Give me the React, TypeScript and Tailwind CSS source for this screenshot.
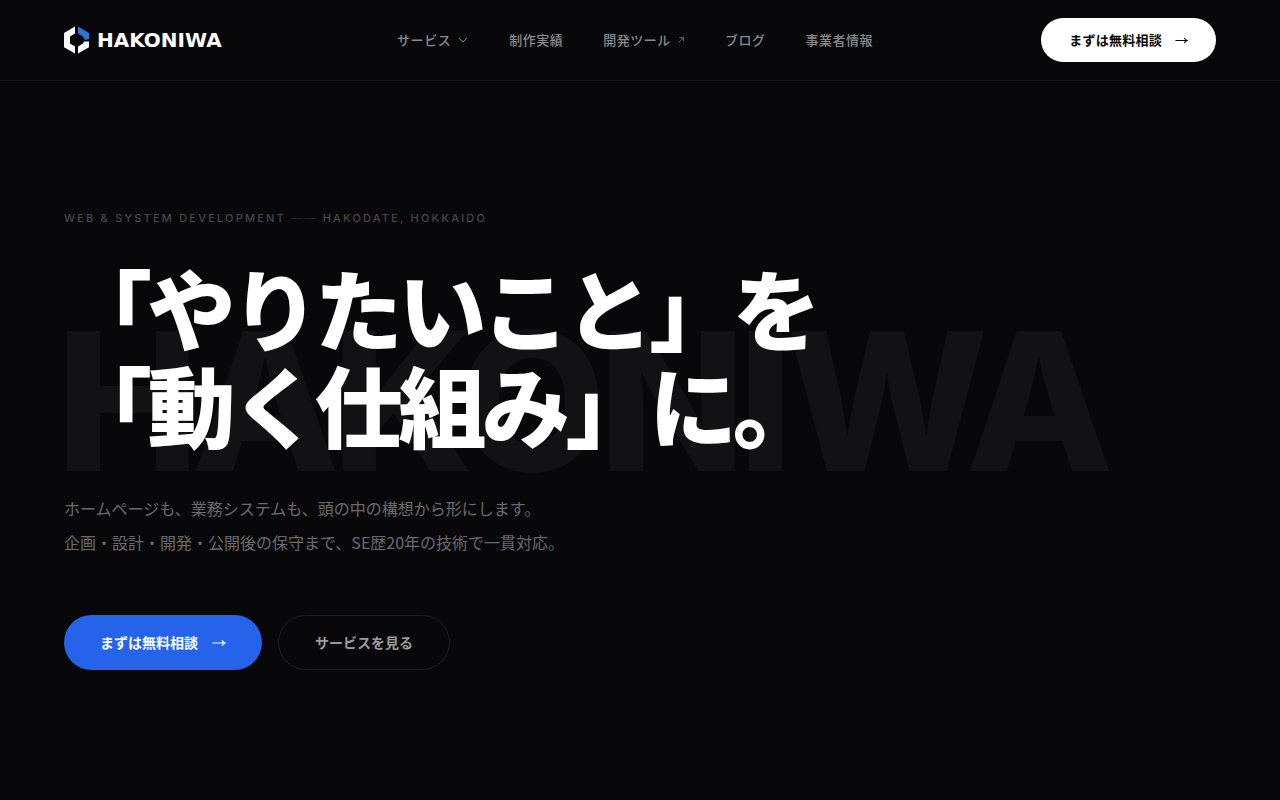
const navItems = [
  { label: 'サービス', icon: 'chevron' },
  { label: '制作実績' },
  { label: '開発ツール', icon: 'external' },
  { label: 'ブログ' },
  { label: '事業者情報' },
]

const Logo = () => (
  <a href="#" className="flex w-[165px] items-center gap-2">
    <svg width="25" height="28" viewBox="0 0 25 28" aria-hidden="true">
      <path d="M11 0.5v7L6 10.5v7l5 3v7L0 21.2V7z" fill="#fff" />
      <path d="M14 0.5L25 7v6l-4 1-2-3.5-5-3z" fill="#2f74d8" />
      <path d="M25 15.5v5.7L14 27.500v-7l5-3 1-2z" fill="#fff" />
    </svg>
    <span className="font-['DejaVu_Sans'] text-[20px] leading-7 font-bold text-white">HAKONIWA</span>
  </a>
)

const Chevron = () => (
  <svg width="12" height="10" viewBox="0 0 12 10" fill="none" stroke="currentColor" aria-hidden="true">
    <path d="M2 3l4 4 4-4" />
  </svg>
)

const External = () => (
  <svg width="8" height="8" viewBox="0 0 8 8" fill="none" stroke="currentColor" strokeWidth="0.9" opacity="0.8" aria-hidden="true">
    <path d="M1.500 6.500l5-5M2.500 1.500h4v4" />
  </svg>
)

const Arrow = () => (
  <svg className="h-[1em] w-[1em]" viewBox="0 0 14 14" fill="none" stroke="currentColor" strokeWidth="1.2" aria-hidden="true">
    <path d="M0.500 7h12.500M10 4.200c.6 1.400 1.600 2.300 3 2.800-1.400.5-2.400 1.400-3 2.800" />
  </svg>
)

const Header = () => (
  <header className="border-b border-[#171719]">
    <div className="flex h-20 items-center justify-between px-16">
      <Logo />
      <nav className="flex items-center gap-10 text-[13px] font-medium tracking-[0.04em] text-[#8a8a8c]">
        {navItems.map((item) => (
          <a key={item.label} href="#" className="flex items-center gap-[6px]">
            {item.label}
            {item.icon === 'chevron' && <Chevron />}
            {item.icon === 'external' && <External />}
          </a>
        ))}
      </nav>
      <button className="flex h-11 items-center gap-[1em] rounded-full bg-white px-7 text-[13px] font-bold tracking-[0.02em] text-[#08080a]">
        まずは無料相談
        <Arrow />
      </button>
    </div>
  </header>
)

const Hero = () => (
  <main className="relative px-16 pt-32">
    {/* oversized wordmark behind the heading */}
    <div
      aria-hidden="true"
      className="absolute top-56 left-14 font-[Inter] text-[192px] leading-none font-extrabold tracking-[-0.04em] whitespace-nowrap text-[#121214] select-none"
    >
      HAKONIWA
    </div>
    <div className="relative">
      <p className="font-[Inter] text-[11px] leading-[18px] font-medium tracking-[0.2em] text-[#464648]">
        WEB &amp; SYSTEM DEVELOPMENT <span className="text-[#242426]">——</span> HAKODATE, HOKKAIDO
      </p>
      <h1 className="mt-[30px] text-[88px] leading-[97px] font-black tracking-[-0.05em] text-white">
        「やりたいこと」を
        <br />
        「動く仕組み」に。
      </h1>
      <p className="mt-10 text-[16px] leading-[34px] text-[#6b6b6d]">
        ホームページも、業務システムも、頭の中の構想から形にします。
        <br />
        企画・設計・開発・公開後の保守まで、SE歴20年の技術で一貫対応。
      </p>
      <div className="mt-14 flex gap-4 text-[14px] font-bold">
        <button className="flex h-[55px] items-center gap-[1em] rounded-full bg-[#2563eb] px-9 text-white">
          まずは無料相談
          <Arrow />
        </button>
        <button className="h-[55px] rounded-full border border-[#1f1f21] px-9 text-[#9c9c9e]">サービスを見る</button>
      </div>
    </div>
  </main>
)

const App = () => (
  <div className="min-h-screen overflow-x-hidden bg-[#08080a] font-['Noto_Sans_CJK_JP',sans-serif]">
    <Header />
    <Hero />
  </div>
)

export default App
